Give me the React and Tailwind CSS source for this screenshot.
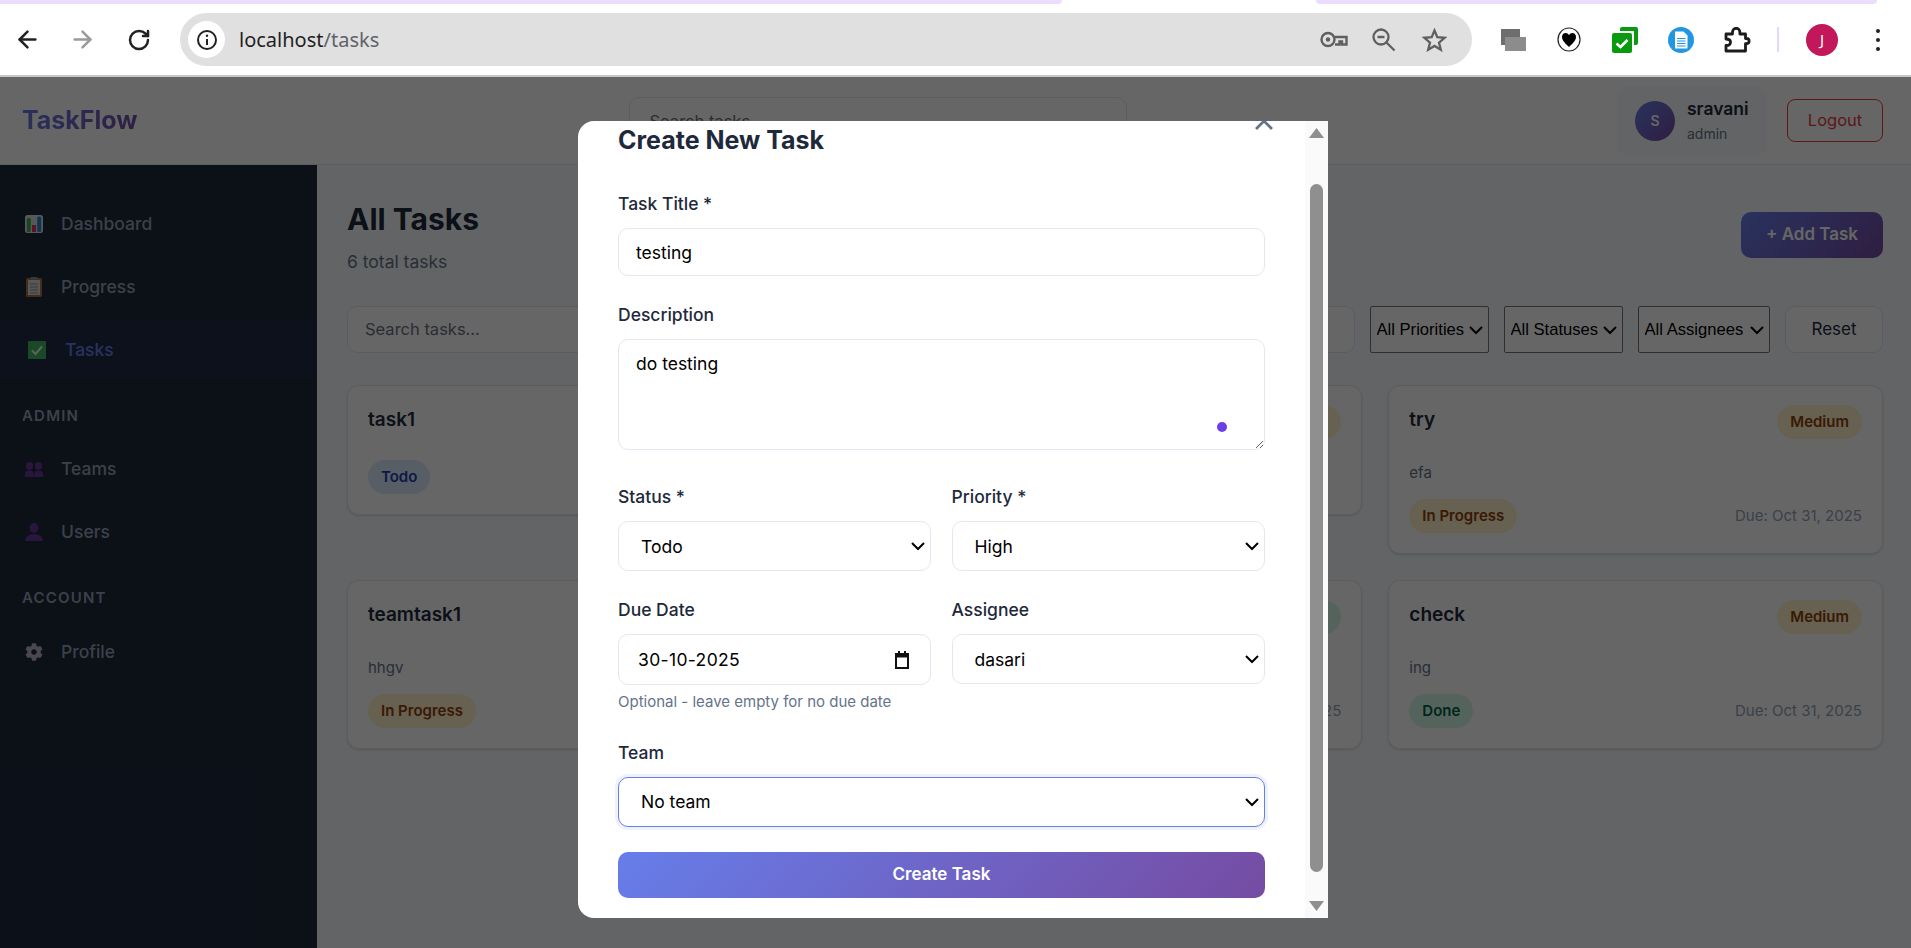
import React from "react";
import { ArrowLeft, ArrowRight, RotateCw } from "lucide-react";
import { FaCog } from "react-icons/fa";

const KeyIcon = () => (
  <svg width="28" height="17" viewBox="0 0 28 17" fill="none" stroke="#5f5f5f" strokeWidth="2.4">
    <circle cx="8" cy="8.5" r="6.5" />
    <circle cx="8" cy="8.5" r="2.2" fill="#5f5f5f" stroke="none" />
    <path d="M14.5 6H26.5V13.5H22V10.5H19.5V13.5H15" />
  </svg>
);

const ZoomOutIcon = () => (
  <svg width="24" height="24" viewBox="0 0 24 24" fill="none" stroke="#5f5f5f" strokeWidth="2.3">
    <circle cx="9" cy="9" r="7.5" />
    <path d="M5.5 9H12.5M14.5 14.5L22.5 22.5" />
  </svg>
);

const StarIcon = () => (
  <svg width="25" height="24" viewBox="0 0 25 24" fill="none" stroke="#5f5f5f" strokeWidth="2.3" strokeLinejoin="miter">
    <path d="M12.5 2.5L15.3 9.2L22.6 9.8L17 14.6L18.8 21.7L12.5 17.9L6.2 21.7L8 14.6L2.4 9.8L9.7 9.2Z" />
  </svg>
);

const Ext1 = () => (
  <svg width="25" height="22" viewBox="0 0 25 22">
    <rect x="0" y="0" width="19" height="16" fill="#6e6e6e" />
    <rect x="4" y="8" width="21" height="14" fill="#8c8c8c" />
  </svg>
);

const HeartExt = () => (
  <svg width="24" height="25" viewBox="0 0 24 25">
    <ellipse cx="12" cy="12.5" rx="11" ry="11.5" fill="#fff" stroke="#222" strokeWidth="1.2" />
    <path d="M12 20C7 15.5 5 13 5 9.8 5 7.5 6.7 6 8.6 6 10 6 11.3 6.8 12 8.2 12.7 6.8 14 6 15.4 6 17.3 6 19 7.5 19 9.8 19 13 17 15.5 12 20Z" fill="#000" />
  </svg>
);

const GreenExt = () => (
  <svg width="26" height="26" viewBox="0 0 26 26">
    <path d="M8 2a2 2 0 0 1 2-2H24a2 2 0 0 1 2 2V16a2 2 0 0 1-2 2H22V4H8Z" fill="#0a9a10" />
    <rect x="0" y="6" width="20" height="20" rx="2" fill="#0a9a10" />
    <path d="M4.5 16.5L8.5 20L15.5 13" fill="none" stroke="#fff" strokeWidth="2.6" />
  </svg>
);

const DocExt = () => (
  <svg width="26" height="26" viewBox="0 0 26 26">
    <circle cx="13" cy="13" r="13" fill="#2196e3" />
    <path d="M7 4.5H15.5L19.5 8.5V21.5H7Z" fill="#fff" />
    <path d="M9 11.5H17.5M9 14H17.5M9 16.5H17.5M9 19H17.5" stroke="#2196e3" strokeWidth="1.2" />
  </svg>
);

const PuzzleIcon = () => (
  <svg width="27" height="26" viewBox="0 0 27 26" fill="none" stroke="#1c1c1e" strokeWidth="2.8" strokeLinejoin="round">
    <path d="M2 7H8.5V5a3.7 3.7 0 0 1 7.4 0V7H21.5V11.5H22.5a2.6 2.6 0 0 1 0 5.2H21.5V24H2V18.5C6 18.5 6.5 16.5 6.5 15.2 6.5 13.5 5.5 12 2 12Z" />
  </svg>
);

const ChartEmoji = () => (
  <svg width="18" height="18" viewBox="0 0 18 18">
    <rect width="18" height="18" rx="2.5" fill="#dcdcdc" />
    <rect x="1.8" y="3" width="4" height="14" rx="1.5" fill="#3fae4a" />
    <rect x="7" y="10" width="4" height="7" fill="#d9365e" />
    <rect x="12.2" y="1.5" width="4" height="15.5" rx="1.5" fill="#2a86d2" />
  </svg>
);

const ClipEmoji = () => (
  <svg width="16" height="20" viewBox="0 0 16 20">
    <rect y="1" width="16" height="19" rx="1.5" fill="#b0703c" />
    <rect x="2" y="3" width="12" height="15" fill="#dcdcdc" />
    <rect x="4.5" y="0" width="7" height="3" fill="#8a8a8a" />
    <path d="M4 7H12M4 10H12M4 13H12M4 16H12" stroke="#8a8a8a" strokeWidth="1" />
  </svg>
);

const CheckEmoji = () => (
  <svg width="18" height="18" viewBox="0 0 18 18">
    <rect width="18" height="18" rx="1" fill="#43b765" />
    <path d="M4 9.5L7.5 13L14 5.5" fill="none" stroke="#e8f5ec" strokeWidth="2" />
  </svg>
);

const TeamEmoji = () => (
  <svg width="18" height="15" viewBox="0 0 18 15" fill="#66389a">
    <ellipse cx="4.5" cy="4" rx="3.6" ry="4" />
    <ellipse cx="13.5" cy="4" rx="3.6" ry="4" />
    <path d="M0 15V12C0 9.5 2 8.5 4.5 8.5S8.7 9.5 8.7 12V15ZM9.3 15V12C9.3 9.5 11 8.5 13.5 8.5S18 9.5 18 12V15Z" />
  </svg>
);

const UserEmoji = () => (
  <svg width="18" height="18" viewBox="0 0 18 18" fill="#66389a">
    <ellipse cx="9" cy="5" rx="4.5" ry="5" />
    <path d="M0 18C0 14 3.5 11 9 11S18 14 18 18Z" />
  </svg>
);

const Chevron = () => (
  <svg
    className="pointer-events-none absolute top-1/2 right-[6px] -translate-y-1/2"
    width="14"
    height="9"
    viewBox="0 0 14 9"
    fill="none"
    stroke="#000"
    strokeWidth="2"
  >
    <path d="M1 1.5L7 7.5L13 1.5" />
  </svg>
);

const Select = ({ wrap, className, children }) => (
  <div className={`relative ${wrap || ""}`}>
    <select className={`w-full appearance-none ${className}`}>
      <option>{children}</option>
    </select>
    <Chevron />
  </div>
);

const SideItem = ({ icon, label, active, y }) => (
  <div
    className={`flex items-center ${y} ${
      active ? "bg-[#667eea]/[0.05] pl-[28px] text-[#667eea]" : "pl-[25px] text-[#94a3b8]"
    }`}
  >
    <span className="flex w-[18px] justify-center">{icon}</span>
    <span className={`${active ? "ml-[19px]" : "ml-[18px]"} text-[17.5px] font-medium`}>{label}</span>
  </div>
);

const Pill = ({ kind, children }) => {
  const colors = {
    blue: "bg-[#dbeafe] text-[#1e40af]",
    yellow: "bg-[#fef3c7] text-[#92400e]",
    green: "bg-[#d1fae5] text-[#065f46]",
  };
  return (
    <span className={`inline-flex h-[34px] items-center rounded-[17px] px-[13px] text-[15px] font-semibold ${colors[kind]}`}>
      {children}
    </span>
  );
};

const TaskCard = ({ title, priority, priorityKind, desc, status, statusKind, due }) => (
  <div className="rounded-xl border border-[#e2e8f0] bg-white px-5 pt-[19px] pb-[20px] shadow-sm">
    <div className="mb-[21px] flex items-start justify-between">
      <h3 className="text-[19px] leading-[30px] font-semibold text-[#1e293b]">{title}</h3>
      <Pill kind={priorityKind}>{priority}</Pill>
    </div>
    {desc && <p className="mb-[14px] pt-[1px] text-[15px] leading-6 text-[#64748b]">{desc}</p>}
    <div className="flex items-center justify-between">
      <Pill kind={statusKind}>{status}</Pill>
      {due && <span className="text-[15px] text-[#94a3b8]">{due}</span>}
    </div>
  </div>
);

const gradient = "bg-[linear-gradient(135deg,#667eea,#764ba2)]";
const fieldLabel = "block h-6 text-[17.5px] leading-6 font-medium text-[#1e293b]";
const fieldBox = "w-full rounded-[10px] border border-[#e2e8f0] bg-white text-[17.5px] text-black outline-none";
const filterBox = "h-[47px] rounded-[2px] border border-[#767676] bg-white pt-[2px] pl-[5.5px] font-['Liberation_Sans',sans-serif] text-[16.6px] text-black";
const modalSelect = `${fieldBox} h-[50px] pt-[2px] pr-6 pl-[22px]`;

export default function App() {
  return (
    <div className="flex h-screen w-screen flex-col overflow-hidden bg-white font-['Inter',sans-serif]">
      {/* browser chrome */}
      <div className="h-[77px] shrink-0 border-b-2 border-[#c8c8c8] bg-white">
        <div className="flex h-[4px]">
          <div className="w-[1062px] rounded-br-lg bg-[#ecdcfd]" />
          <div className="ml-[254px] w-[561px] rounded-b-lg bg-[#ecdcfd]" />
        </div>
        <div className="flex h-[71px] items-center">
          <div className="flex w-[54px] justify-center">
            <ArrowLeft size={27} color="#222" strokeWidth={2.2} />
          </div>
          <div className="flex w-[56px] justify-center">
            <ArrowRight size={27} color="#9a9a9a" strokeWidth={2.2} />
          </div>
          <div className="flex w-[58px] justify-center">
            <RotateCw size={24} color="#222" strokeWidth={2.5} />
          </div>
          <div className="ml-[12px] flex h-[53px] w-[1292px] items-center rounded-full bg-[#e0e0e0] pr-[13px] pl-[8px]">
            <div className="flex h-[37px] w-[37px] items-center justify-center rounded-full bg-white">
              <svg width="22" height="22" viewBox="0 0 22 22" fill="none" stroke="#222" strokeWidth="2">
                <circle cx="11" cy="11" r="9" />
                <path d="M11 10V16" />
                <circle cx="11" cy="6.8" r="1.2" fill="#222" stroke="none" />
              </svg>
            </div>
            <span className="ml-[14px] font-['Noto_Sans',sans-serif] text-[20px] text-[#1f1f1f]">
              localhost<span className="text-[#5f6368]">/tasks</span>
            </span>
            <div className="ml-auto flex items-center">
              <div className="flex w-[50px] justify-center"><KeyIcon /></div>
              <div className="flex w-[50px] justify-center"><ZoomOutIcon /></div>
              <div className="flex w-[50px] justify-center"><StarIcon /></div>
            </div>
          </div>
          <div className="ml-[13px] flex items-center">
            <div className="flex w-[56px] justify-center"><Ext1 /></div>
            <div className="flex w-[56px] justify-center"><HeartExt /></div>
            <div className="flex w-[56px] justify-center"><GreenExt /></div>
            <div className="flex w-[56px] justify-center"><DocExt /></div>
            <div className="flex w-[56px] justify-center"><PuzzleIcon /></div>
          </div>
          <div className="ml-[12px] h-[25px] w-[2px] bg-[#e6d8fb]" />
          <div className="ml-[27px] flex h-8 w-8 items-center justify-center rounded-full bg-[#c2185b] font-['Noto_Sans',sans-serif] text-[15px] text-white">
            J
          </div>
          <div className="ml-[38px] flex flex-col gap-[5px]">
            <div className="h-1 w-1 rounded-full bg-[#222]" />
            <div className="h-1 w-1 rounded-full bg-[#222]" />
            <div className="h-1 w-1 rounded-full bg-[#222]" />
          </div>
        </div>
      </div>

      {/* page */}
      <div className="relative flex min-h-0 flex-1 flex-col">
        <header className="flex h-[88px] shrink-0 items-center border-b border-[#e2e8f0] bg-white pr-[28px] pl-[22px]">
          <div className="w-[606.5px] shrink-0">
            <span className={`${gradient} bg-clip-text text-[25px] font-bold text-transparent`}>TaskFlow</span>
          </div>
          <input
            placeholder="Search tasks..."
            className="h-[48px] w-[498px] rounded-[10px] border border-[#e2e8f0] bg-white px-5 text-[16.5px] outline-none placeholder:text-[#6b7280]"
          />
          <div className="ml-auto flex items-center gap-5">
            <div className="flex h-[69px] w-[150px] items-center gap-3 rounded-xl bg-[#f8fafc] pl-[18px]">
              <div className={`flex h-10 w-10 items-center justify-center rounded-full ${gradient} text-sm font-semibold text-white`}>
                S
              </div>
              <div className="mt-[2px] flex flex-col gap-[5px]">
                <span className="text-[17.5px] leading-5 font-semibold text-[#1e293b]">sravani</span>
                <span className="text-[14px] leading-5 text-[#64748b]">admin</span>
              </div>
            </div>
            <button className="-mt-px h-[43px] w-[96px] rounded-lg border border-[#e53e3e] text-[16.5px] text-[#e53e3e]">
              Logout
            </button>
          </div>
        </header>

        <div className="flex min-h-0 flex-1">
          <aside className="w-[317px] shrink-0 bg-[#1e293b]">
            <div className="pt-[35px]">
              <SideItem icon={<ChartEmoji />} label="Dashboard" y="h-[48px]" />
            </div>
            <div className="mt-[15px]">
              <SideItem icon={<ClipEmoji />} label="Progress" y="h-[48px]" />
            </div>
            <div className="mt-[10px]">
              <SideItem icon={<CheckEmoji />} label="Tasks" active y="h-[58px]" />
            </div>
            <div className="mt-[27px] pl-[22px] text-[15px] leading-5 font-semibold tracking-[0.08em] text-[#94a3b8]">ADMIN</div>
            <div className="mt-[19px]">
              <SideItem icon={<TeamEmoji />} label="Teams" y="h-[48px]" />
            </div>
            <div className="mt-[15px]">
              <SideItem icon={<UserEmoji />} label="Users" y="h-[48px]" />
            </div>
            <div className="mt-[32px] pl-[22px] text-[15px] leading-5 font-semibold tracking-[0.08em] text-[#94a3b8]">ACCOUNT</div>
            <div className="mt-[20px]">
              <SideItem icon={<FaCog size={18} color="#b9b4c4" />} label="Profile" y="h-[48px]" />
            </div>
          </aside>

          <main className="min-w-0 flex-1 bg-[#f8fafc] pt-[34px] pr-[28px] pl-[30px]">
            <div className="flex items-start justify-between">
              <div>
                <h1 className="text-[30px] leading-10 font-bold text-[#1e293b]">All Tasks</h1>
                <p className="mt-[11px] text-[17.5px] leading-6 text-[#64748b]">6 total tasks</p>
              </div>
              <button className={`mt-[13px] h-[46px] w-[142px] rounded-[10px] ${gradient} text-[17px] font-semibold text-white`}>
                + Add Task
              </button>
            </div>

            <div className="mt-[32px] flex items-center gap-[15.5px]">
              <input
                placeholder="Search tasks..."
                className="h-[47px] min-w-0 flex-1 rounded-[10px] border border-[#e2e8f0] bg-white px-[17px] pb-[2px] text-[16.5px] outline-none placeholder:text-[#6b7280]"
              />
              <Select wrap="w-[118.5px] shrink-0" className={filterBox}>All Priorities</Select>
              <Select wrap="w-[118.5px] shrink-0" className={filterBox}>All Statuses</Select>
              <Select wrap="w-[131.5px] shrink-0" className={filterBox}>All Assignees</Select>
              <button className="h-[47px] w-[98px] shrink-0 rounded-[10px] border border-[#e2e8f0] bg-white text-[17px] text-[#1e293b]">
                Reset
              </button>
            </div>

            <div className="mt-[32px] grid grid-cols-3 items-start gap-[26px]">
              <TaskCard title="task1" priority="Low" priorityKind="green" status="Todo" statusKind="blue" />
              <TaskCard title="task2" priority="Medium" priorityKind="yellow" status="Todo" statusKind="blue" />
              <TaskCard title="try" priority="Medium" priorityKind="yellow" desc="efa" status="In Progress" statusKind="yellow" due="Due: Oct 31, 2025" />
              <TaskCard title="teamtask1" priority="Medium" priorityKind="yellow" desc="hhgv" status="In Progress" statusKind="yellow" due="Due: Oct 31, 2025" />
              <TaskCard title="task3" priority="Low" priorityKind="green" desc="test" status="Todo" statusKind="blue" due="Due: Oct 31, 2025" />
              <TaskCard title="check" priority="Medium" priorityKind="yellow" desc="ing" status="Done" statusKind="green" due="Due: Oct 31, 2025" />
            </div>
          </main>
        </div>

        {/* modal overlay */}
        <div className="absolute inset-0 bg-black/60">
          <div className="absolute top-[44px] left-[578px] flex h-[797px] w-[750px] overflow-hidden rounded-l-2xl bg-white">
            <div className="relative min-w-0 flex-1 pt-[5px] pr-[40px] pl-[40px]">
              <svg className="absolute -top-[9px] right-[32px]" width="18" height="18" viewBox="0 0 18 18" stroke="#64748b" strokeWidth="2.8">
                <path d="M1 1L17 17M17 1L1 17" />
              </svg>
              <h2 className="text-[25px] leading-[29px] font-bold text-[#1e293b]">Create New Task</h2>

              <label className={`${fieldLabel} mt-[37px]`}>Task Title *</label>
              <input defaultValue="testing" className={`${fieldBox} mt-3 h-[48px] px-[17px]`} />

              <label className={`${fieldLabel} mt-[27px]`}>Description</label>
              <div className="relative mt-3">
                <textarea defaultValue="do testing" className={`${fieldBox} block h-[111px] px-[17px] py-[11px]`} />
                <span className="absolute top-[83px] right-[38px] h-[10px] w-[10px] rounded-full bg-[#6d3de8]" />
              </div>

              <div className="mt-[35px] grid grid-cols-[312.5px_1fr] gap-x-[21px]">
                <div>
                  <label className={fieldLabel}>Status *</label>
                  <Select wrap="mt-3" className={modalSelect}>Todo</Select>
                </div>
                <div>
                  <label className={fieldLabel}>Priority *</label>
                  <Select wrap="mt-3" className={modalSelect}>High</Select>
                </div>
              </div>

              <div className="mt-[27px] grid grid-cols-[312.5px_1fr] items-start gap-x-[21px]">
                <div>
                  <label className={fieldLabel}>Due Date</label>
                  <div className={`${fieldBox} mt-3 flex h-[51px] items-center justify-between pr-[20px] pl-[19px]`}>
                    <span className="pt-[2px] tracking-[0.02em]">30-10-2025</span>
                    <svg width="16" height="18" viewBox="0 0 16 18" fill="none" stroke="#111" strokeWidth="2">
                      <rect x="2" y="3" width="12" height="14" />
                      <path d="M2 5H14" strokeWidth="3" />
                      <path d="M5 0V3M11 0V3" />
                    </svg>
                  </div>
                  <p className="mt-[7px] text-[15px] leading-5 text-[#64748b]">Optional - leave empty for no due date</p>
                </div>
                <div>
                  <label className={fieldLabel}>Assignee</label>
                  <Select wrap="mt-3" className={modalSelect}>dasari</Select>
                </div>
              </div>

              <label className={`${fieldLabel} mt-[29px]`}>Team</label>
              <Select
                wrap="mt-3"
                className="h-[50px] rounded-[10px] border border-[#667eea] bg-white pr-6 pl-[22px] text-[17.5px] text-black shadow-[0_0_0_3px_rgba(102,126,234,0.1)] outline-none"
              >
                No team
              </Select>

              <button className={`mt-[25px] h-[46px] w-full rounded-[10px] ${gradient} text-[17px] font-semibold text-white`}>
                Create Task
              </button>
            </div>

            {/* scrollbar */}
            <div className="flex w-[23px] shrink-0 flex-col items-center bg-[#fafafa] pt-[7px]">
              <svg width="15" height="10" viewBox="0 0 15 10" fill="#8f8f8f"><path d="M7.5 0L15 10H0Z" /></svg>
              <div className="mt-[46px] h-[688px] w-[13px] rounded-full bg-[#8f8f8f]" />
              <svg className="mt-[29px]" width="15" height="10" viewBox="0 0 15 10" fill="#8f8f8f"><path d="M0 0H15L7.5 10Z" /></svg>
            </div>
          </div>
        </div>
      </div>
    </div>
  );
}
